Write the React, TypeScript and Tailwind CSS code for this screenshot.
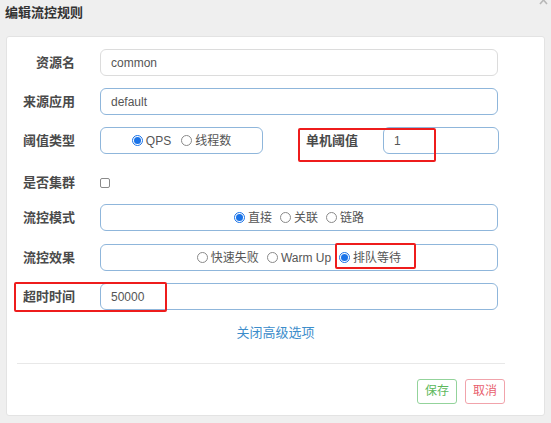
import React from 'react';

const font = { fontFamily: '"Liberation Sans", "Noto Sans CJK SC", sans-serif' };

function Radio({ checked, label }: { checked?: boolean; label: string }) {
  return (
    <span className="flex items-center">
      <span
        className={
          checked
            ? 'w-[11px] h-[11px] rounded-full border border-[#1a73e8] flex items-center justify-center bg-white'
            : 'w-[11px] h-[11px] rounded-full border border-[#8a8a8a] bg-white'
        }
      >
        {checked && <span className="w-[7px] h-[7px] rounded-full bg-[#1a73e8]" />}
      </span>
      <span className="ml-[3px]">{label}</span>
    </span>
  );
}

function Label({ children }: { children: React.ReactNode }) {
  return (
    <div className="w-[68px] shrink-0 text-right text-[13px] font-bold text-[#4a4a4a]">{children}</div>
  );
}

const inputCls =
  'h-[27px] rounded-[6px] border border-[#8fb6db] bg-white flex items-center px-[10px] text-[12px] text-[#555]';

export default function App() {
  return (
    <div className="relative w-[551px] h-[423px] bg-[#efefef] overflow-hidden" style={font}>
      {/* close icon, mostly scrolled out at the top */}
      <svg className="absolute top-[-5px] right-[3px]" width="9" height="11" viewBox="0 0 9 11">
        <path d="M1 1 L8 9 M8 1 L1 9" stroke="#b8b8b8" strokeWidth="1.6" fill="none" />
      </svg>
      <div className="pl-[5px] pt-[3px] h-[36px] text-[13px] font-bold text-[#333]">编辑流控规则</div>
      <div className="relative mx-[6px] h-[380px] bg-white rounded-[3px] border border-[#e3e3e3] pt-[12px]">
        {/* 资源名 */}
        <div className="flex items-center">
          <Label>资源名</Label>
          <div className={inputCls + ' ml-[25px] w-[398px] bg-[#ededed] border-[#dcdcdc]'}>common</div>
        </div>
        {/* 来源应用 */}
        <div className="flex items-center mt-[12px]">
          <Label>来源应用</Label>
          <div className={inputCls + ' ml-[25px] w-[398px]'}>default</div>
        </div>
        {/* 阈值类型 / 单机阈值 */}
        <div className="flex items-center mt-[12px]">
          <Label>阈值类型</Label>
          <div className={inputCls + ' ml-[25px] w-[163px] justify-center gap-[10px]'}>
            <Radio checked label="QPS" />
            <Radio label="线程数" />
          </div>
          <div className="ml-[43px] text-[13px] font-bold text-[#4a4a4a]">单机阈值</div>
          <div className={inputCls + ' ml-[25px] w-[116px]'}>1</div>
        </div>
        {/* 是否集群 */}
        <div className="flex items-center mt-[17px] h-[24px]">
          <Label>是否集群</Label>
          <span className="ml-[25px] w-[10px] h-[10px] border border-[#8a8a8a] rounded-[2px] bg-white" />
        </div>
        {/* 流控模式 */}
        <div className="flex items-center mt-[9px]">
          <Label>流控模式</Label>
          <div className={inputCls + ' ml-[25px] w-[398px] justify-center gap-[8px]'}>
            <Radio checked label="直接" />
            <Radio label="关联" />
            <Radio label="链路" />
          </div>
        </div>
        {/* 流控效果 */}
        <div className="flex items-center mt-[13px]">
          <Label>流控效果</Label>
          <div className={inputCls + ' ml-[25px] w-[398px] justify-center gap-[8px]'}>
            <Radio label="快速失败" />
            <Radio label="Warm Up" />
            <Radio checked label="排队等待" />
          </div>
        </div>
        {/* 超时时间 */}
        <div className="flex items-center mt-[12px]">
          <Label>超时时间</Label>
          <div className={inputCls + ' ml-[25px] w-[398px]'}>50000</div>
        </div>
        <div className="mt-[13px] text-center text-[13px] text-[#3c8dcb]">关闭高级选项</div>
        <div className="ml-[10px] w-[488px] mt-[20px] border-t border-[#e8e8e8]" />
        <div className="flex justify-end gap-[8px] mr-[39px] mt-[15px]">
          <div className="w-[40px] h-[25px] rounded-[3px] border border-[#93d39b] text-[#5cb85c] text-[12px] flex items-center justify-center">
            保存
          </div>
          <div className="w-[40px] h-[25px] rounded-[3px] border border-[#f1a3ab] text-[#e8606e] text-[12px] flex items-center justify-center">
            取消
          </div>
        </div>

        {/* red annotation boxes */}
        <div className="absolute left-[291px] top-[91px] w-[138px] h-[34px] border-2 border-[#ee1c1c] rounded-[2px]" />
        <div className="absolute left-[328px] top-[206px] w-[81px] h-[26px] border-2 border-[#ee1c1c] rounded-[2px]" />
        <div className="absolute left-[7px] top-[245px] w-[153px] h-[30px] border-2 border-[#ee1c1c] rounded-[2px]" />
      </div>
    </div>
  );
}
